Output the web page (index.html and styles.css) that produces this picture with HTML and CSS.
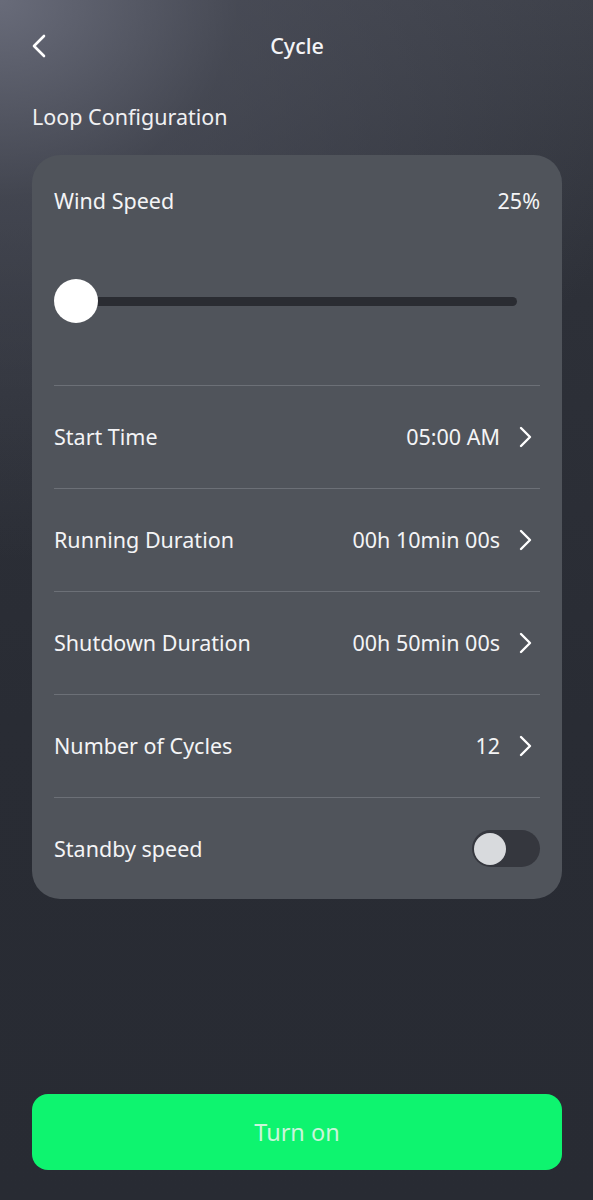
FILE: index.html
```html
<!DOCTYPE html>
<html lang="en">
<head>
    <meta charset="UTF-8">
    <meta name="viewport" content="width=device-width, initial-scale=1.0">
    <title>Cycle</title>
    <link rel="stylesheet" href="styles.css">
</head>
<body>
    <div class="ekran">
        <header class="ust">
            <div class="geri">
                <svg width="14" height="24" viewBox="0 0 14 24">
                    <path d="M12 2 L2 12 L12 22" fill="none" stroke="#fff" stroke-width="2.6" stroke-linecap="round" stroke-linejoin="round"/>
                </svg>
            </div>
            <h1>Cycle</h1>
            <div></div>
        </header>

        <h2 class="baslik">Loop Configuration</h2>

        <section class="kart">
            <div class="hiz">
                <div class="satirUst">
                    <span>Wind Speed</span>
                    <span>25%</span>
                </div>
                <div class="kaydirici">
                    <div class="ray"></div>
                    <div class="tutamac"></div>
                </div>
            </div>

            <div class="satir">
                <span>Start Time</span>
                <div class="deger">
                    <span>05:00 AM</span>
                    <svg class="ok" width="14" height="22" viewBox="0 0 14 22"><path d="M3 2 L12 11 L3 20" fill="none" stroke="#fff" stroke-width="2.4" stroke-linecap="round" stroke-linejoin="round"/></svg>
                </div>
            </div>
            <div class="satir">
                <span>Running Duration</span>
                <div class="deger">
                    <span>00h 10min 00s</span>
                    <svg class="ok" width="14" height="22" viewBox="0 0 14 22"><path d="M3 2 L12 11 L3 20" fill="none" stroke="#fff" stroke-width="2.4" stroke-linecap="round" stroke-linejoin="round"/></svg>
                </div>
            </div>
            <div class="satir">
                <span>Shutdown Duration</span>
                <div class="deger">
                    <span>00h 50min 00s</span>
                    <svg class="ok" width="14" height="22" viewBox="0 0 14 22"><path d="M3 2 L12 11 L3 20" fill="none" stroke="#fff" stroke-width="2.4" stroke-linecap="round" stroke-linejoin="round"/></svg>
                </div>
            </div>
            <div class="satir">
                <span>Number of Cycles</span>
                <div class="deger">
                    <span>12</span>
                    <svg class="ok" width="14" height="22" viewBox="0 0 14 22"><path d="M3 2 L12 11 L3 20" fill="none" stroke="#fff" stroke-width="2.4" stroke-linecap="round" stroke-linejoin="round"/></svg>
                </div>
            </div>
            <div class="satir son">
                <span>Standby speed</span>
                <div class="anahtar">
                    <div class="topuz"></div>
                </div>
            </div>
        </section>

        <div class="bosluk"></div>

        <button class="ac">Turn on</button>
    </div>
</body>
</html>
```

FILE: styles.css
```css
* {
    box-sizing: border-box;
}

body {
    margin: 0;
    padding: 0;
    font-family: "Noto Sans", "Open Sans", sans-serif;
    color: #f4f4f6;
    background-color: #292c34;
}

.ekran {
    width: 593px;
    height: 1200px;
    display: flex;
    flex-direction: column;
    padding: 0 31px 0 32px;
    background:
        radial-gradient(ellipse 680px 560px at 0 0, rgba(112, 115, 130, 0.85) 0%, rgba(80, 83, 95, 0.55) 35%, rgba(41, 44, 52, 0) 100%),
        linear-gradient(180deg, #3c3f48 0%, #2d3038 25%, #292c34 60%, #282b33 100%);
}

.ust {
    height: 92px;
    display: grid;
    grid-template-columns: 1fr auto 1fr;
    align-items: center;
}

.geri {
    display: flex;
    align-items: center;
}

.ust h1 {
    margin: 0;
    font-size: 21.5px;
    font-weight: 500;
    line-height: 28px;
}

.baslik {
    margin: 11px 0 0 0;
    font-size: 21.5px;
    font-weight: 400;
    line-height: 28px;
    color: #f0f0f2;
}

.kart {
    margin-top: 24px;
    background-color: #50545b;
    border-radius: 28px;
    padding: 0 22px;
    display: flex;
    flex-direction: column;
}

.hiz {
    padding-top: 32px;
    padding-bottom: 62px;
    border-bottom: 1px solid #6c7077;
}

.satirUst {
    display: flex;
    justify-content: space-between;
    font-size: 21.5px;
    line-height: 28px;
}

.kaydirici {
    position: relative;
    margin-top: 64px;
    height: 44px;
    display: flex;
    align-items: center;
    padding-right: 23px;
}

.ray {
    flex: 1;
    height: 9px;
    border-radius: 5px;
    background-color: #2a2c32;
}

.tutamac {
    position: absolute;
    left: 0;
    top: 0;
    width: 44px;
    height: 44px;
    border-radius: 50%;
    background-color: #fff;
}

.satir {
    height: 103px;
    display: flex;
    justify-content: space-between;
    align-items: center;
    border-bottom: 1px solid #6c7077;
    font-size: 21.5px;
    line-height: 28px;
}

.satir.son {
    height: 101px;
    border-bottom: none;
}

.deger {
    display: flex;
    align-items: center;
    gap: 18px;
}

.ok {
    margin-right: 8px;
}

.anahtar {
    width: 68px;
    height: 37px;
    border-radius: 19px;
    background-color: #35373e;
    display: flex;
    align-items: center;
    padding-left: 2px;
}

.topuz {
    width: 32px;
    height: 32px;
    border-radius: 50%;
    background-color: #d8dadd;
}

.bosluk {
    flex: 1;
}

.ac {
    margin: 0 0 30px 0;
    height: 76px;
    width: 100%;
    border: none;
    border-radius: 16px;
    background-color: #0ef46f;
    color: #c9f6da;
    font-family: "Noto Sans", "Open Sans", sans-serif;
    font-size: 23.5px;
    font-weight: 400;
    cursor: pointer;
}
```
